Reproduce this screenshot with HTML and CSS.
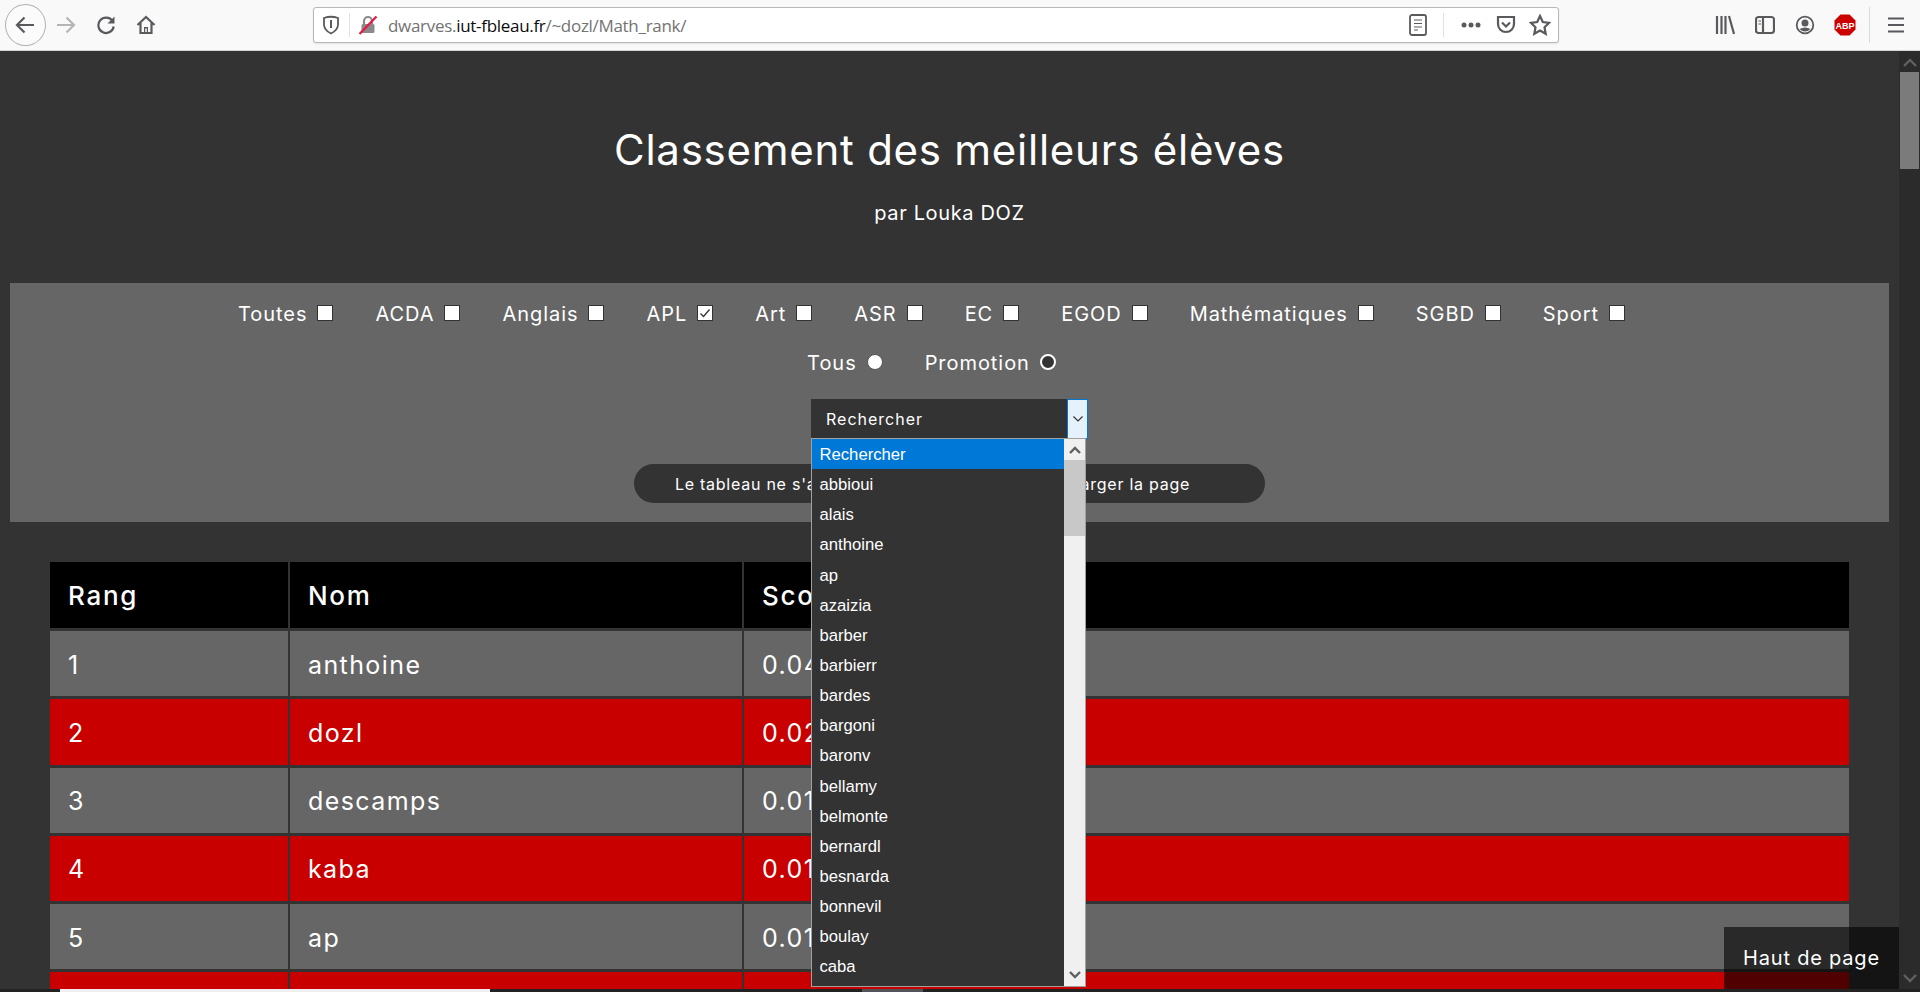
FILE: index.html
```html
<!DOCTYPE html>
<html lang="fr">
  <head>
    <meta charset="UTF-8" />
    <title>Classement des meilleurs élèves</title>
    <link rel="stylesheet" href="styles.css">
  </head>
  <body>
    <header class="toolbar">
      <div class="back-btn">
        <svg width="22" height="22" viewBox="0 0 22 22"><path class="ico" d="M2 11 H19 M9.500 3.500 L2 11 L9.500 18.500"/></svg>
      </div>
      <div class="tool-btn">
        <svg width="22" height="22" viewBox="0 0 22 22"><path class="ico ico-off" d="M2 11 H19 M11.500 3.500 L19 11 L11.500 18.500"/></svg>
      </div>
      <div class="tool-btn">
        <svg width="20" height="20" viewBox="0 0 20 20"><path class="ico" d="M16.500 6 A7.700 7.700 0 1 0 17.700 11.500"/><path class="ico-fill" d="M18.500 1.500 V8.500 H11.500 Z"/></svg>
      </div>
      <div class="tool-btn">
        <svg width="20" height="20" viewBox="0 0 20 20"><path class="ico" d="M1.500 10 L10 2 L18.500 10 M4.500 8 V18 H15.500 V8"/><path class="ico-fill" d="M8 18 V12 H12 V18 H10.800 V13.500 H9.200 V18 Z"/></svg>
      </div>

      <div class="urlbar">
        <svg class="url-shield" width="18" height="20" viewBox="0 0 18 20"><path class="ico ico-thin" d="M2 3 Q9 0.500 16 3 V10 Q15.500 15.500 9 18.500 Q2.500 15.500 2 10 Z"/><path class="ico-fill" d="M8 5 H10 V13 H8 Z"/></svg>
        <span class="url-sep"></span>
        <svg class="url-lock" width="20" height="20" viewBox="0 0 20 20"><path class="ico ico-grey" d="M6 9 V6 A4 4 0 0 1 14 6 V9"/><rect class="ico-grey-fill" x="3.500" y="9" width="13" height="9" rx="1.500"/><path class="lock-slash" d="M1.500 19 L18.500 1.500"/></svg>
        <span class="url-text">dwarves.<b>iut-fbleau.fr</b>/~dozl/Math_rank/</span>
        <div class="url-actions">
          <svg class="act-reader" width="18" height="22" viewBox="0 0 18 22"><rect class="ico ico-thin" x="1" y="1" width="16" height="20" rx="2"/><path class="ico ico-hair" d="M5 6 H13 M5 9.500 H13 M5 13 H13 M5 16 H9"/></svg>
          <span class="url-sep url-sep-right"></span>
          <svg class="act-dots" width="20" height="6" viewBox="0 0 20 6"><circle class="ico-fill" cx="3" cy="3" r="2.500"/><circle class="ico-fill" cx="10" cy="3" r="2.500"/><circle class="ico-fill" cx="17" cy="3" r="2.500"/></svg>
          <svg class="act-pocket" width="20" height="20" viewBox="0 0 20 20"><path class="ico" d="M2 2 H18 V9 A8 8 0 0 1 2 9 Z"/><path class="ico" d="M6 7.500 L10 11.500 L14 7.500"/></svg>
          <svg class="act-star" width="22" height="22" viewBox="0 0 22 22"><path class="ico" d="M11 2 L13.800 8 L20.200 8.800 L15.500 13.300 L16.700 19.800 L11 16.600 L5.300 19.800 L6.500 13.300 L1.800 8.800 L8.200 8 Z"/></svg>
        </div>
      </div>

      <div class="tools-right">
        <div class="tool-btn">
          <svg width="20" height="20" viewBox="0 0 20 20"><path class="ico" d="M2 1 V19 M6.500 1 V19 M10.500 1 V19 M14 1 L19 19"/></svg>
        </div>
        <div class="tool-btn">
          <svg width="20" height="20" viewBox="0 0 20 20"><rect class="ico" x="1" y="2" width="18" height="16" rx="2.500"/><path class="ico" d="M8 2 V18"/><path class="ico ico-hair" d="M3.500 6 H6 M3.500 9 H6"/></svg>
        </div>
        <div class="tool-btn">
          <svg width="20" height="20" viewBox="0 0 20 20"><circle class="ico ico-thin" cx="10" cy="10" r="8.300"/><circle class="ico-fill" cx="10" cy="8" r="3.500"/><path class="ico-fill" d="M4.500 14 Q10 11 15.500 14 Q10 19 4.500 14 Z"/></svg>
        </div>
        <div class="tool-btn">
          <svg width="22" height="22" viewBox="0 0 22 22"><path class="abp-bg" d="M6.500 0.500 H15.500 L21.500 6.500 V15.500 L15.500 21.500 H6.500 L0.500 15.500 V6.500 Z"/><text class="abp-text" x="11" y="14.500" text-anchor="middle">ABP</text></svg>
        </div>
        <span class="tools-sep"></span>
        <div class="tool-btn">
          <svg width="18" height="18" viewBox="0 0 18 18"><path class="ico" d="M1 2.500 H17 M1 9 H17 M1 15.500 H17"/></svg>
        </div>
      </div>
    </header>

    <div class="viewport">
      <main class="page">
        <h1 class="title">Classement des meilleurs élèves</h1>
        <p class="author">par Louka DOZ</p>

        <section class="panel">
          <div class="filter-row">
            <label class="filter">Toutes <span class="box"></span></label>
            <label class="filter">ACDA <span class="box"></span></label>
            <label class="filter">Anglais <span class="box"></span></label>
            <label class="filter">APL <span class="box"><svg width="14" height="14" viewBox="0 0 14 14"><path class="check" d="M2.500 7.500 L5.500 10.500 L11.500 3.500"/></svg></span></label>
            <label class="filter">Art <span class="box"></span></label>
            <label class="filter">ASR <span class="box"></span></label>
            <label class="filter">EC <span class="box"></span></label>
            <label class="filter">EGOD <span class="box"></span></label>
            <label class="filter">Mathématiques <span class="box"></span></label>
            <label class="filter">SGBD <span class="box"></span></label>
            <label class="filter">Sport <span class="box"></span></label>
          </div>
          <div class="filter-row">
            <label class="filter">Tous <span class="radio"></span></label>
            <label class="filter">Promotion <span class="radio radio-on"></span></label>
          </div>

          <div class="search">
            <div class="search-value">Rechercher</div>
            <div class="search-btn">
              <svg width="10" height="6" viewBox="0 0 10 6"><path class="chev-thin" d="M0.500 0.500 L5 5 L9.500 0.500"/></svg>
            </div>
            <div class="dropdown">
              <ul class="options">
                <li class="option option-on">Rechercher</li>
                <li class="option">abbioui</li>
                <li class="option">alais</li>
                <li class="option">anthoine</li>
                <li class="option">ap</li>
                <li class="option">azaizia</li>
                <li class="option">barber</li>
                <li class="option">barbierr</li>
                <li class="option">bardes</li>
                <li class="option">bargoni</li>
                <li class="option">baronv</li>
                <li class="option">bellamy</li>
                <li class="option">belmonte</li>
                <li class="option">bernardl</li>
                <li class="option">besnarda</li>
                <li class="option">bonnevil</li>
                <li class="option">boulay</li>
                <li class="option">caba</li>
              </ul>
              <div class="list-scroll">
                <svg class="list-arrow" width="12" height="8" viewBox="0 0 12 8"><path class="chev" d="M1 7 L6 2 L11 7"/></svg>
                <div class="list-thumb"></div>
                <svg class="list-arrow list-arrow-down" width="12" height="8" viewBox="0 0 12 8"><path class="chev" d="M1 1 L6 6 L11 1"/></svg>
              </div>
            </div>
          </div>

          <p class="notice">Le tableau ne s'actualise pas, il vous faudra recharger la page</p>
        </section>

        <table class="ranking">
          <thead>
            <tr><th class="col-rank">Rang</th><th class="col-name">Nom</th><th>Score</th></tr>
          </thead>
          <tbody>
            <tr><td>1</td><td>anthoine</td><td>0.0435</td></tr>
            <tr><td>2</td><td>dozl</td><td>0.0263</td></tr>
            <tr><td>3</td><td>descamps</td><td>0.0167</td></tr>
            <tr><td>4</td><td>kaba</td><td>0.0149</td></tr>
            <tr><td>5</td><td>ap</td><td>0.0132</td></tr>
            <tr><td></td><td></td><td></td></tr>
          </tbody>
        </table>

        <a class="top-link">Haut de page</a>
      </main>

      <aside class="scrollbar">
        <svg class="scroll-arrow" width="14" height="9" viewBox="0 0 14 9"><path class="chev" d="M1 8 L7 2 L13 8"/></svg>
        <div class="scroll-thumb"></div>
        <svg class="scroll-arrow scroll-arrow-down" width="14" height="9" viewBox="0 0 14 9"><path class="chev" d="M1 1 L7 7 L13 1"/></svg>
      </aside>
    </div>

    <footer class="strip">
      <span class="strip-white"></span>
      <span class="strip-grey"></span>
    </footer>
  </body>
</html>
```

FILE: styles.css
```css
html,
body {
  margin: 0;
  height: 992px;
  overflow: hidden;
}
body {
  display: flex;
  flex-direction: column;
  background-color: #333;
  color: white;
  font-family: Inter, "Liberation Sans", sans-serif;
}

/* browser bar */
.toolbar {
  display: flex;
  align-items: center;
  flex-shrink: 0;
  height: 50px;
  padding-left: 5px;
  background-color: #f9f9fa;
  border-bottom: 1px solid #d4d4d6;
}
.back-btn {
  display: flex;
  align-items: center;
  justify-content: center;
  box-sizing: border-box;
  width: 41px;
  height: 42px;
  border: 1px solid #b1b1b3;
  border-radius: 50%;
  background-color: #fbfbfb;
}
.tool-btn {
  display: flex;
  align-items: center;
  justify-content: center;
  width: 40px;
  height: 40px;
}
.ico {
  fill: none;
  stroke: #5a5a5e;
  stroke-width: 2.2;
}
.ico-thin {
  stroke-width: 1.8;
}
.ico-hair {
  stroke-width: 1.2;
}
.ico-off {
  stroke: #b5b5b7;
}
.ico-grey {
  stroke: #8a8a8c;
}
.ico-fill {
  fill: #5a5a5e;
}
.ico-grey-fill {
  fill: #8a8a8c;
}
.lock-slash {
  stroke: #e8173f;
  stroke-width: 2.2;
}
.urlbar {
  display: flex;
  align-items: center;
  box-sizing: border-box;
  width: 1246px;
  height: 36px;
  margin-left: 147px;
  background-color: white;
  border: 1px solid #b8b8ba;
  border-radius: 3px;
  box-shadow: 0 1px 2px rgba(0, 0, 0, 0.1);
}
.url-shield {
  margin-left: 8px;
}
.url-sep {
  width: 1px;
  height: 24px;
  margin-left: 9px;
  background-color: #e2e2e4;
}
.url-lock {
  margin-left: 8px;
}
.url-text {
  margin-left: 10px;
  font-family: "Open Sans", sans-serif;
  font-size: 17px;
  letter-spacing: -0.3px;
  color: #737373;
}
.url-text b {
  font-weight: 400;
  color: #0c0c0d;
}
.url-actions {
  display: flex;
  align-items: center;
  margin-left: auto;
  padding-right: 7px;
}
.url-sep-right {
  margin-left: 16px;
}
.act-dots {
  margin-left: 17px;
}
.act-pocket {
  margin-left: 15px;
}
.act-star {
  margin-left: 13px;
}
.tools-right {
  display: flex;
  align-items: center;
  margin-left: 146px;
}
.tools-sep {
  width: 1px;
  height: 36px;
  margin: 0 6px 0 4px;
  background-color: #dcdcde;
}
.abp-bg {
  fill: #cc0000;
}
.abp-text {
  fill: white;
  font-family: "Liberation Sans", sans-serif;
  font-size: 9px;
  font-weight: bold;
}

/* page */
.viewport {
  display: flex;
  flex: 1;
  min-height: 0;
}
.page {
  position: relative;
  flex: 1;
  min-width: 0;
  overflow: hidden;
  padding-top: 75px;
}
.title {
  margin: 0;
  font-size: 42px;
  line-height: 48px;
  font-weight: 400;
  letter-spacing: 0.75px;
  text-align: center;
}
.author {
  margin: 27px 0 0;
  font-size: 20px;
  line-height: 24px;
  letter-spacing: 0.65px;
  text-align: center;
}
.panel {
  display: flex;
  flex-direction: column;
  align-items: center;
  gap: 25px;
  margin: 58px 10px 0;
  padding: 18px 0 19px;
  background-color: #666;
}
.filter-row {
  display: flex;
  gap: 42px;
  padding-right: 36px;
}
.filter {
  display: flex;
  align-items: center;
  gap: 10px;
  box-sizing: border-box;
  height: 24px;
  padding-top: 2px;
  font-size: 20px;
  line-height: 24px;
  letter-spacing: 0.95px;
}
.box {
  display: flex;
  align-items: center;
  justify-content: center;
  box-sizing: border-box;
  width: 16px;
  height: 16px;
  margin-top: -2px;
  background-color: white;
  border: 1px solid #333;
}
.check {
  fill: none;
  stroke: #333;
  stroke-width: 1.3;
}
.radio {
  box-sizing: border-box;
  width: 16px;
  height: 16px;
  margin-top: -2px;
  background-color: white;
  border: 1px solid #555;
  border-radius: 50%;
}
.radio-on {
  background-color: #333;
  border: 2px solid white;
}
.search {
  position: relative;
  display: flex;
  height: 40px;
}
.search-value {
  display: flex;
  align-items: center;
  box-sizing: border-box;
  width: 256px;
  padding-left: 15px;
  background-color: #333;
  font-size: 16px;
  letter-spacing: 1px;
}
.search-btn {
  display: flex;
  align-items: center;
  justify-content: center;
  box-sizing: border-box;
  width: 21px;
  background-color: #e5f1fb;
  border: 1px solid #0078d7;
}
.chev-thin {
  fill: none;
  stroke: #333;
  stroke-width: 1.2;
}
.dropdown {
  position: absolute;
  top: 39px;
  left: 0;
  display: flex;
  box-sizing: border-box;
  width: 275px;
  height: 549px;
  background-color: #333;
  border: 1px solid #a0a0a0;
  overflow: hidden;
}
.options {
  flex: 1;
  margin: 0;
  padding: 0;
  list-style: none;
  font-family: "Liberation Sans", sans-serif;
  font-size: 16.67px;
}
.option {
  height: 30.15px;
  line-height: 32px;
  padding-left: 7.5px;
}
.option-on {
  background-color: #0078d7;
}
.list-scroll {
  display: flex;
  flex-direction: column;
  align-items: center;
  width: 21px;
  background-color: #f0f0f0;
}
.list-arrow {
  flex-shrink: 0;
  margin: 7px 0 6px;
}
.list-arrow-down {
  margin: auto 0 7px;
}
.list-thumb {
  width: 100%;
  height: 76px;
  background-color: #c8c8c8;
}
.chev {
  fill: none;
  stroke: #606060;
  stroke-width: 2.4;
}
.notice {
  box-sizing: border-box;
  width: 631px;
  height: 39px;
  margin: 0;
  padding: 0 34px 0 0;
  background-color: #333;
  border-radius: 20px;
  font-size: 16px;
  line-height: 41px;
  letter-spacing: 0.75px;
  text-align: center;
  white-space: nowrap;
}

/* table */
.ranking {
  table-layout: fixed;
  width: 1803px;
  margin: 37px 48px 0;
  border-collapse: separate;
  border-spacing: 2px 3px;
}
.ranking th,
.ranking td {
  box-sizing: border-box;
  padding: 2px 18px 0 18px;
  text-align: left;
}
.col-rank {
  width: 238px;
}
.col-name {
  width: 452px;
}
.ranking th {
  height: 66px;
  padding-top: 0;
  font-size: 26px;
  font-weight: 500;
  letter-spacing: 1.7px;
  background-color: black;
}
.ranking td {
  height: 65.25px;
  font-size: 25px;
  letter-spacing: 1.4px;
  background-color: #666;
}
.ranking tbody tr:nth-child(even) td {
  background-color: #c80000;
}
.top-link {
  position: absolute;
  right: 0;
  bottom: 0;
  display: flex;
  align-items: center;
  justify-content: center;
  box-sizing: border-box;
  width: 175px;
  height: 62px;
  background-color: rgba(0, 0, 0, 0.6);
  font-size: 20px;
  letter-spacing: 0.8px;
}

/* page scrollbar */
.scrollbar {
  display: flex;
  flex-direction: column;
  align-items: center;
  flex-shrink: 0;
  width: 21px;
  background-color: #2b2b2b;
}
.scroll-arrow {
  flex-shrink: 0;
  margin: 7px 0 5px;
}
.scroll-arrow-down {
  margin: auto 0 6px;
}
.scroll-thumb {
  width: 19px;
  height: 97px;
  background-color: #7b7b7b;
}

/* bottom edge */
.strip {
  position: relative;
  flex-shrink: 0;
  height: 3px;
  background-color: #222;
}
.strip-white {
  position: absolute;
  left: 60px;
  width: 430px;
  height: 3px;
  background-color: #efefef;
}
.strip-grey {
  position: absolute;
  left: 862px;
  width: 61px;
  height: 3px;
  background-color: #55525a;
}
```
